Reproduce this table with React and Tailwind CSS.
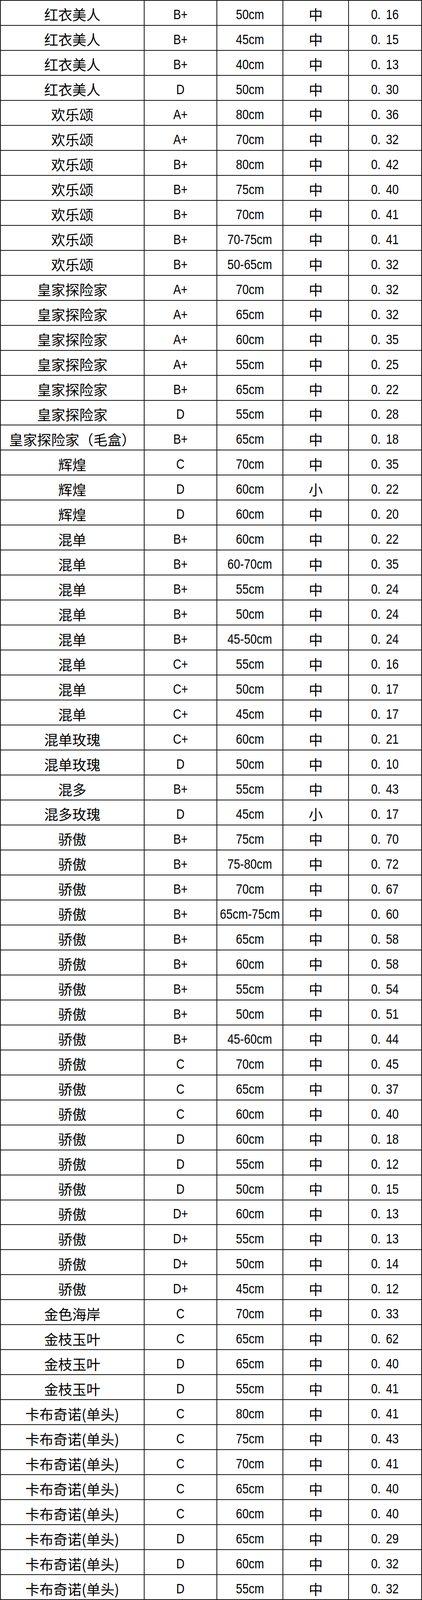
import React from "react";

const rows = [
  ["红衣美人", "B+", "50cm", "中", "0.16"],
  ["红衣美人", "B+", "45cm", "中", "0.15"],
  ["红衣美人", "B+", "40cm", "中", "0.13"],
  ["红衣美人", "D", "50cm", "中", "0.30"],
  ["欢乐颂", "A+", "80cm", "中", "0.36"],
  ["欢乐颂", "A+", "70cm", "中", "0.32"],
  ["欢乐颂", "B+", "80cm", "中", "0.42"],
  ["欢乐颂", "B+", "75cm", "中", "0.40"],
  ["欢乐颂", "B+", "70cm", "中", "0.41"],
  ["欢乐颂", "B+", "70-75cm", "中", "0.41"],
  ["欢乐颂", "B+", "50-65cm", "中", "0.32"],
  ["皇家探险家", "A+", "70cm", "中", "0.32"],
  ["皇家探险家", "A+", "65cm", "中", "0.32"],
  ["皇家探险家", "A+", "60cm", "中", "0.35"],
  ["皇家探险家", "A+", "55cm", "中", "0.25"],
  ["皇家探险家", "B+", "65cm", "中", "0.22"],
  ["皇家探险家", "D", "55cm", "中", "0.28"],
  ["皇家探险家（毛盒）", "B+", "65cm", "中", "0.18"],
  ["辉煌", "C", "70cm", "中", "0.35"],
  ["辉煌", "D", "60cm", "小", "0.22"],
  ["辉煌", "D", "60cm", "中", "0.20"],
  ["混单", "B+", "60cm", "中", "0.22"],
  ["混单", "B+", "60-70cm", "中", "0.35"],
  ["混单", "B+", "55cm", "中", "0.24"],
  ["混单", "B+", "50cm", "中", "0.24"],
  ["混单", "B+", "45-50cm", "中", "0.24"],
  ["混单", "C+", "55cm", "中", "0.16"],
  ["混单", "C+", "50cm", "中", "0.17"],
  ["混单", "C+", "45cm", "中", "0.17"],
  ["混单玫瑰", "C+", "60cm", "中", "0.21"],
  ["混单玫瑰", "D", "50cm", "中", "0.10"],
  ["混多", "B+", "55cm", "中", "0.43"],
  ["混多玫瑰", "D", "45cm", "小", "0.17"],
  ["骄傲", "B+", "75cm", "中", "0.70"],
  ["骄傲", "B+", "75-80cm", "中", "0.72"],
  ["骄傲", "B+", "70cm", "中", "0.67"],
  ["骄傲", "B+", "65cm-75cm", "中", "0.60"],
  ["骄傲", "B+", "65cm", "中", "0.58"],
  ["骄傲", "B+", "60cm", "中", "0.58"],
  ["骄傲", "B+", "55cm", "中", "0.54"],
  ["骄傲", "B+", "50cm", "中", "0.51"],
  ["骄傲", "B+", "45-60cm", "中", "0.44"],
  ["骄傲", "C", "70cm", "中", "0.45"],
  ["骄傲", "C", "65cm", "中", "0.37"],
  ["骄傲", "C", "60cm", "中", "0.40"],
  ["骄傲", "D", "60cm", "中", "0.18"],
  ["骄傲", "D", "55cm", "中", "0.12"],
  ["骄傲", "D", "50cm", "中", "0.15"],
  ["骄傲", "D+", "60cm", "中", "0.13"],
  ["骄傲", "D+", "55cm", "中", "0.13"],
  ["骄傲", "D+", "50cm", "中", "0.14"],
  ["骄傲", "D+", "45cm", "中", "0.12"],
  ["金色海岸", "C", "70cm", "中", "0.33"],
  ["金枝玉叶", "C", "65cm", "中", "0.62"],
  ["金枝玉叶", "D", "65cm", "中", "0.40"],
  ["金枝玉叶", "D", "55cm", "中", "0.41"],
  ["卡布奇诺(单头)", "C", "80cm", "中", "0.41"],
  ["卡布奇诺(单头)", "C", "75cm", "中", "0.43"],
  ["卡布奇诺(单头)", "C", "70cm", "中", "0.41"],
  ["卡布奇诺(单头)", "C", "65cm", "中", "0.40"],
  ["卡布奇诺(单头)", "C", "60cm", "中", "0.40"],
  ["卡布奇诺(单头)", "D", "65cm", "中", "0.29"],
  ["卡布奇诺(单头)", "D", "60cm", "中", "0.32"],
  ["卡布奇诺(单头)", "D", "55cm", "中", "0.32"],
];

// latin text in the sheet is a narrow, half-width face
const Narrow = ({ children }) => (
  <span className="inline-block text-[35px] scale-x-[0.84] font-['Liberation_Sans',sans-serif]">
    {children}
  </span>
);

const Price = ({ value }) => {
  const [whole, frac] = value.split(".");
  return (
    <Narrow>
      {whole}.<span className="ml-[16px]">{frac}</span>
    </Narrow>
  );
};

const Cell = ({ children, last }) => (
  <div
    className={`flex items-center justify-center pt-[7px] whitespace-nowrap ${
      last ? "" : "border-r-2 border-[#111]"
    }`}
  >
    {children}
  </div>
);

const App = () => {
  return (
    <div className="w-[1080px] h-screen bg-white text-black text-[36px] leading-none flex flex-col border-2 border-[#111] font-['Noto_Sans_CJK_SC',sans-serif]">
      {rows.map((row, i) => (
        <div
          key={i}
          className={`flex-1 min-h-0 grid grid-cols-[368px_186px_169px_168px_1fr] ${
            i === rows.length - 1 ? "" : "border-b-2 border-[#111]"
          }`}
        >
          <Cell>{row[0]}</Cell>
          <Cell>
            <Narrow>{row[1]}</Narrow>
          </Cell>
          <Cell>
            <Narrow>{row[2]}</Narrow>
          </Cell>
          <Cell>{row[3]}</Cell>
          <Cell last>
            <Price value={row[4]} />
          </Cell>
        </div>
      ))}
    </div>
  );
};

export default App;
